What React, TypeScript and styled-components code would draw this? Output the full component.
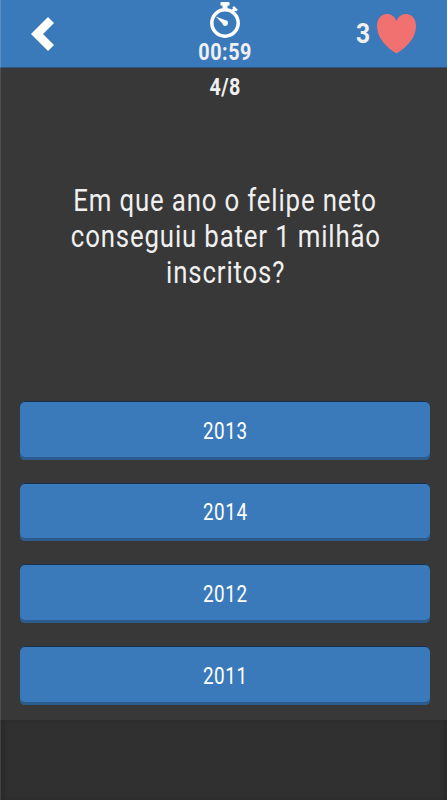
import React from "react";
import styled, { createGlobalStyle } from "styled-components";

const GlobalStyle = createGlobalStyle`
  * { box-sizing: border-box; }
  body { margin: 0; background: #303030; }
`;

const Screen = styled.main`
  width: 447px;
  height: 800px;
  display: flex;
  flex-direction: column;
  overflow: hidden;
  color: #f0f0f0;
  background: #303030;
  font-family: Roboto, sans-serif;
`;

const Header = styled.header`
  height: 68px;
  flex: none;
  display: grid;
  grid-template-columns: 1fr 120px 1fr;
  background: #3b7aba;
  border-bottom: 1px solid #30557c;
  border-left: 1px solid #5d8fc1;
`;

const BackButton = styled.button`
  border: 0;
  padding: 17px 0 0 30px;
  background: none;
  display: flex;
  align-items: flex-start;
`;

const Timer = styled.div`
  display: flex;
  flex-direction: column;
  align-items: center;
  padding-left: 2px;
  svg { display: block; flex: none; }
`;

const Lives = styled.div`
  display: flex;
  justify-content: flex-end;
  align-items: flex-start;
  padding: 14px 31px 0 0;
  gap: 6px;
`;

const Label = styled.span<{ $size: number; $line: number; $weight?: number; $scale?: number; $spacing?: number }>`
  display: block;
  white-space: nowrap;
  font-size: ${(p) => p.$size}px;
  line-height: ${(p) => p.$line}px;
  font-weight: ${(p) => p.$weight ?? 400};
  letter-spacing: ${(p) => p.$spacing ?? 0}px;
  transform: scaleX(${(p) => p.$scale ?? 0.88});
`;

const Quiz = styled.section`
  height: 652px;
  flex: none;
  background: #383838;
  border-left: 1px solid #505050;
  display: flex;
  flex-direction: column;
`;

const Progress = styled.div`
  height: 39px;
  padding: 6px 0 0 3px;
  display: flex;
  justify-content: center;
`;

const Question = styled.h1`
  height: 294px;
  margin: 0;
  padding: 76px 0 0 3px;
  display: flex;
  flex-direction: column;
  align-items: center;
`;

const Answers = styled.div`
  display: flex;
  flex-direction: column;
  gap: 23.2px;
  padding: 0 17px 0 19px;
`;

const Answer = styled.button`
  height: 58.5px;
  padding: 2px 0 0;
  border: 0;
  border-radius: 5px;
  display: flex;
  justify-content: center;
  align-items: center;
  font-family: inherit;
  color: #fff;
  background: #3b7aba;
  box-shadow: inset 0 1px #17304c, inset 0 -3px #2b5b8d;
`;

const Footer = styled.footer`
  flex: 1;
  background: #303030;
  border-left: 1px solid #444;
  box-shadow: inset 5px 0 5px -3px #272727, inset -5px 0 5px -3px #2a2a2a;
`;

const question = ["Em que ano o felipe neto", "conseguiu bater 1 milhão", "inscritos?"];

const answers = ["2013", "2014", "2012", "2011"];

export default function App() {
  return (
    <>
      <GlobalStyle />
      <Screen>
        <Header>
          <BackButton aria-label="Voltar">
            <svg width="24" height="34" viewBox="0 0 24 34">
              <path d="M17 0 23 6 12 17 23 28 17 34 0 17Z" fill="#fff" />
            </svg>
          </BackButton>
          <Timer>
            <svg width="32" height="39" viewBox="0 0 32 39" fill="#fff">
              <path d="M12.5 2H19.5Q20.5 2 20.5 3V5.5H18.5V9H13.5V5.5H11.5V3Q11.5 2 12.5 2Z" />
              <circle cx="16" cy="23" r="13.2" fill="none" stroke="#fff" strokeWidth="3.5" />
              <path d="m22.5 10 1.5-1.5-.8-.8 1.8-1.8 3.8 3.8-1.8 1.8-.8-.8-1.5 1.5Z" />
              <path d="M6.8 16.5 16.5 20.3A2.8 2.8 0 1 1 13.4 23.4Z" />
            </svg>
            <Label $size={23} $line={28} $weight={700} $scale={0.86} $spacing={0.6}>00:59</Label>
          </Timer>
          <Lives>
            <Label $size={28} $line={39} $weight={700}>3</Label>
            <svg width="39" height="40" viewBox="0 0 39 40">
              <path d="M19.5 7C17 1.5 13.5 0 10 0 4 0 0 5 0 12 0 24 9 33 19.5 39.5 30 33 39 24 39 12 39 5 35 0 29 0 25.5 0 22 1.5 19.5 7Z" fill="#f17070" />
            </svg>
          </Lives>
        </Header>
        <Quiz>
          <Progress><Label $size={23} $line={27} $weight={700} $scale={0.86} $spacing={0.5}>4/8</Label></Progress>
          <Question>
            {question.map((line) => (
              <Label key={line} $size={30.6} $line={36} $scale={0.843} $spacing={1}>{line}</Label>
            ))}
          </Question>
          <Answers>
            {answers.map((answer) => (
              <Answer key={answer}><Label $size={23} $line={27} $scale={0.82} $spacing={0.7}>{answer}</Label></Answer>
            ))}
          </Answers>
        </Quiz>
        <Footer />
      </Screen>
    </>
  );
}
